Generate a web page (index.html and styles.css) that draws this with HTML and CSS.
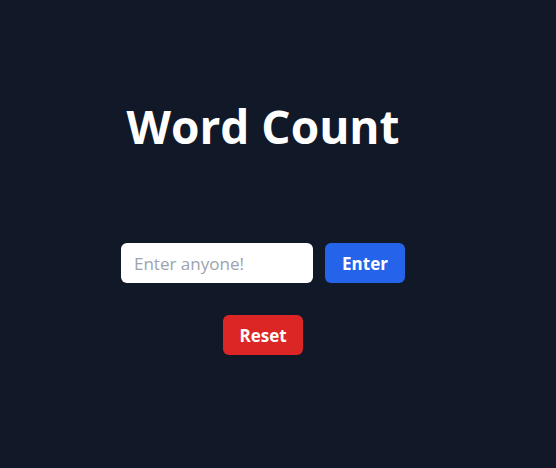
FILE: index.html
```html
<!DOCTYPE html>
<html>
<head>
<meta charset="utf-8">
<link rel="stylesheet" href="styles.css">
</head>
<body>
<main class="app">
  <h1 class="title">Word Count</h1>
  <div class="row">
    <input class="field" type="text" placeholder="Enter anyone!">
    <button class="btn btn-blue">Enter</button>
  </div>
  <button class="btn btn-red">Reset</button>
</main>
</body>
</html>
```

FILE: styles.css
```css
html, body {
  margin: 0;
  padding: 0;
  background: #111827;
  height: 100%;
}
body {
  font-family: "Open Sans", "Noto Sans", sans-serif;
}
.app {
  display: flex;
  flex-direction: column;
  align-items: center;
  padding: 98px 30px 0 0;
}
.title {
  margin: 0;
  color: #ffffff;
  font-size: 46px;
  font-weight: 700;
  line-height: 56px;
}
.row {
  display: flex;
  gap: 12px;
  margin-top: 89px;
}
.field {
  box-sizing: border-box;
  width: 192px;
  height: 40px;
  border: none;
  border-radius: 6px;
  padding: 0 13px;
  font-family: inherit;
  font-size: 17px;
  color: #111827;
  background: #fff;
  outline: none;
}
.field::placeholder {
  color: #9ca3af;
}
.btn {
  box-sizing: border-box;
  width: 80px;
  height: 40px;
  border: none;
  border-radius: 6px;
  color: #fff;
  font-family: inherit;
  font-size: 17px;
  font-weight: 700;
  padding: 0;
}
.btn-blue { background: #2563eb; }
.btn-red { background: #dc2626; margin-top: 32px; }
```
